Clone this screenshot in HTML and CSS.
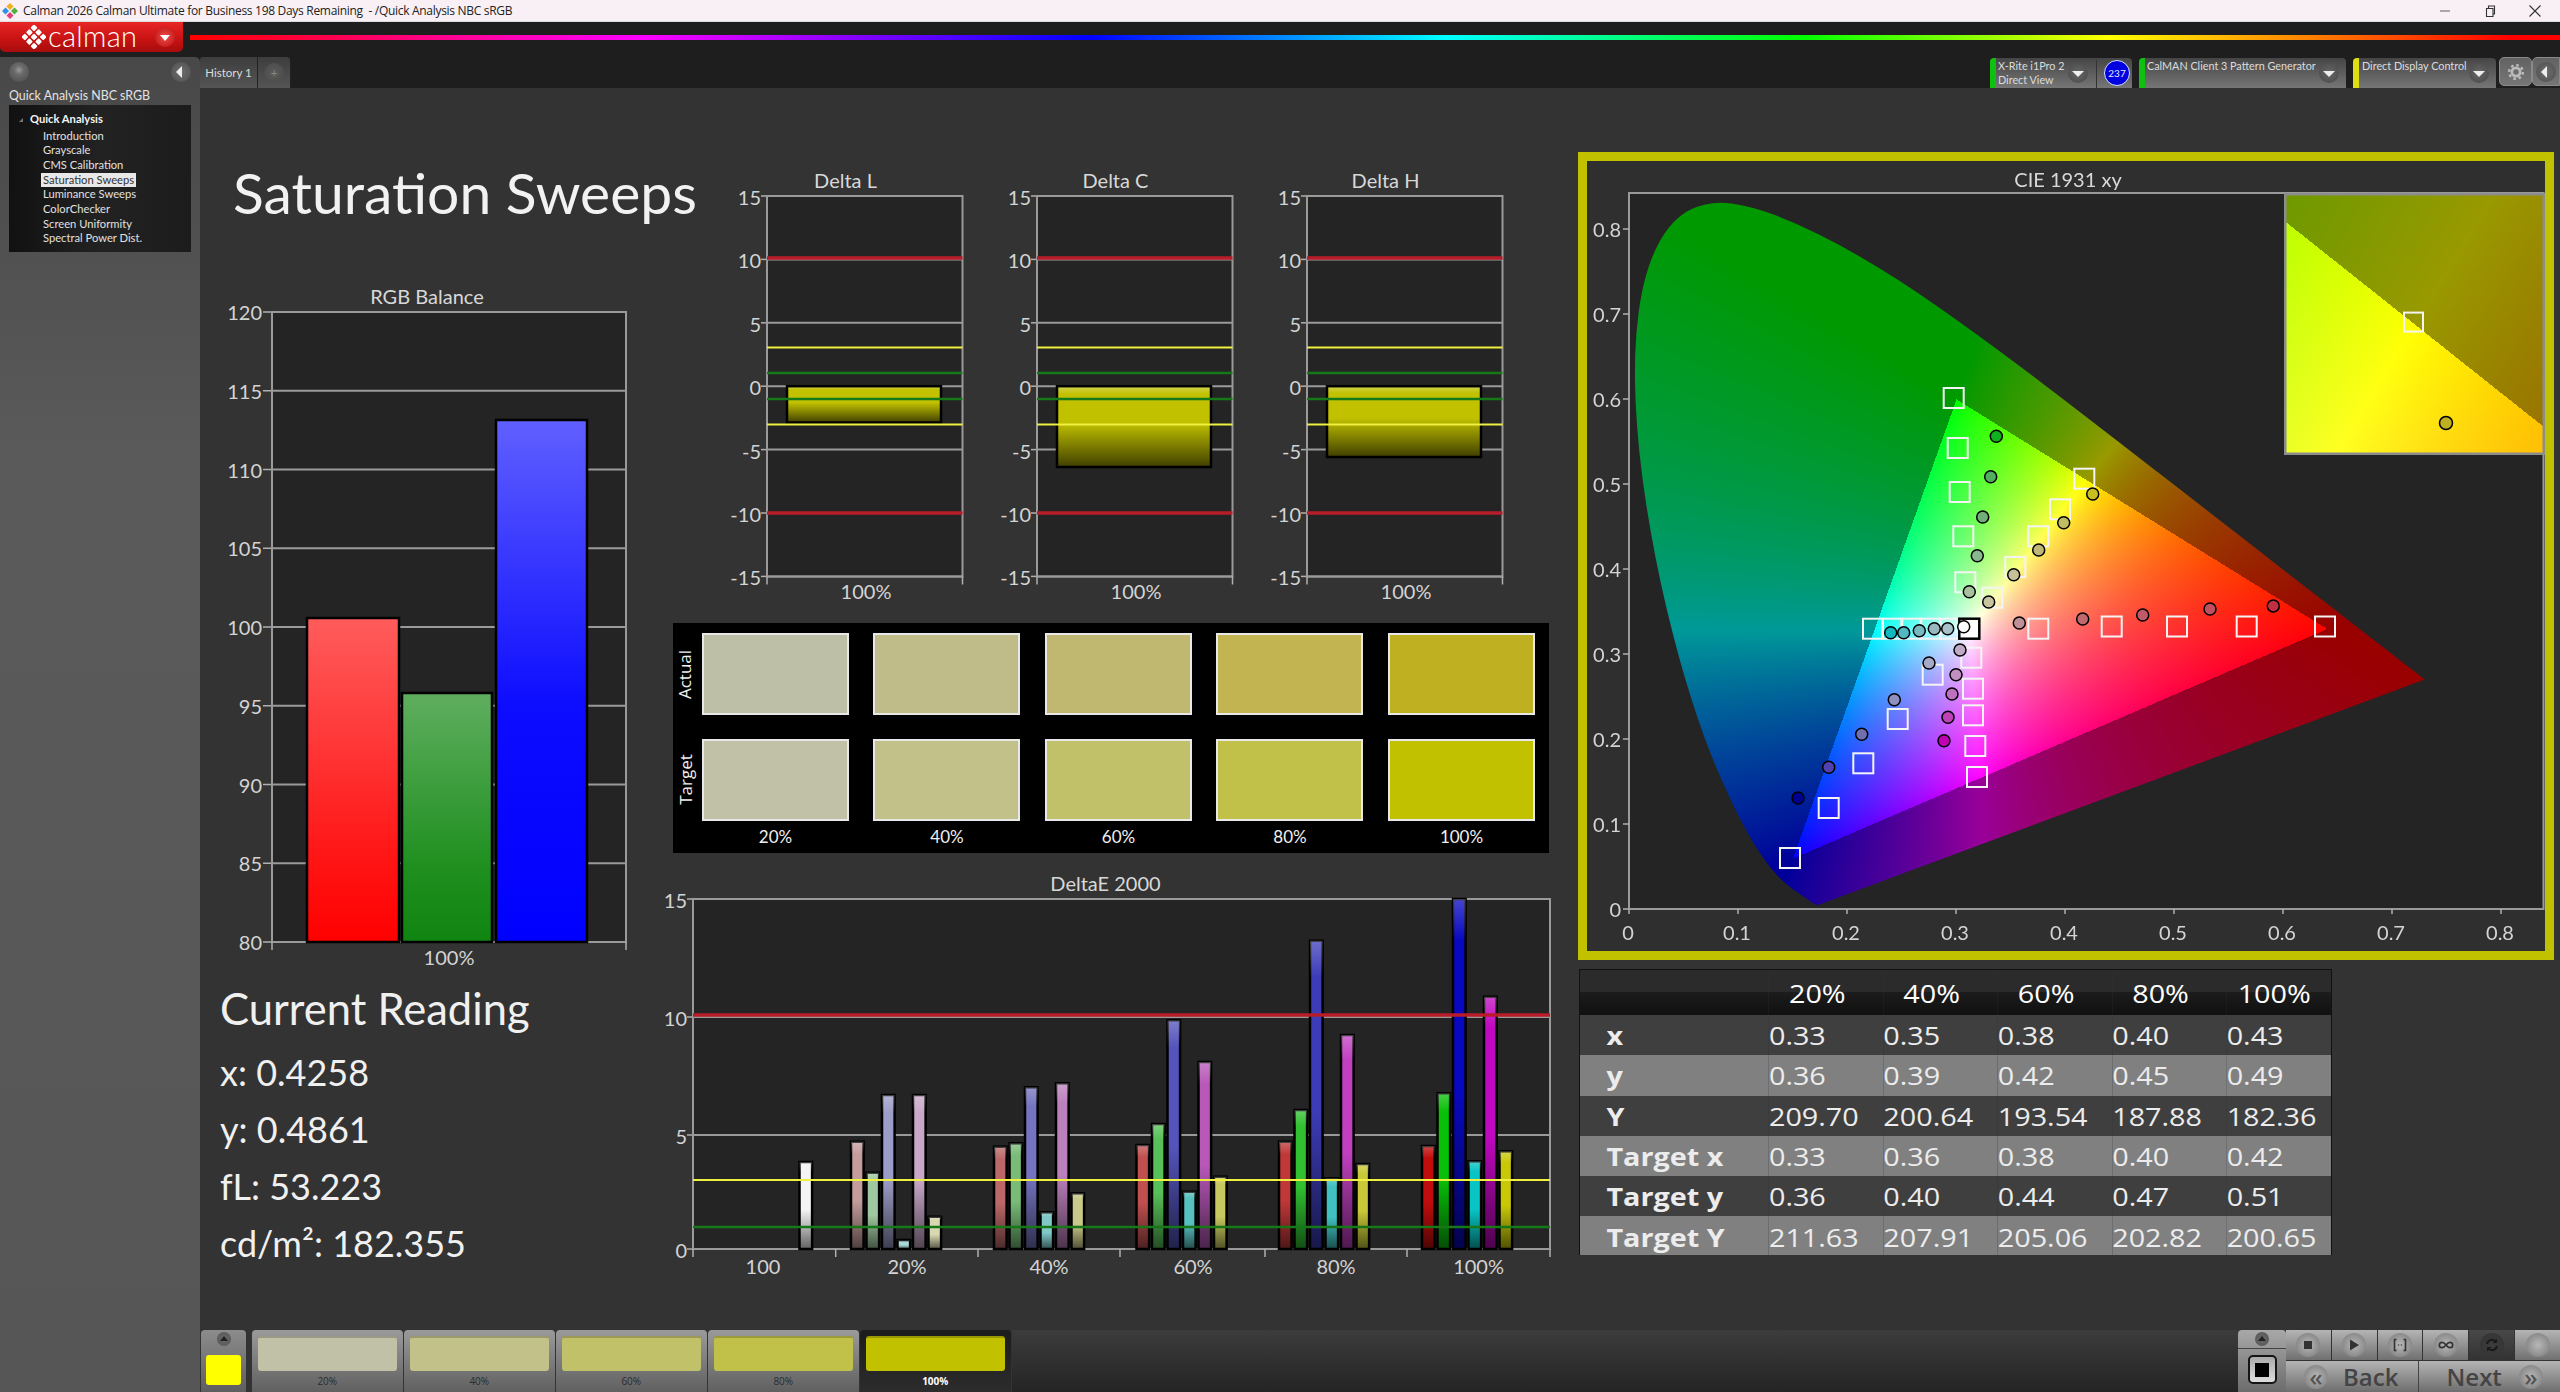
FILE: index.html
```html
<!DOCTYPE html>
<html lang="en">
<head>
    <meta charset="UTF-8">
    <title>Calman 2026 - Quick Analysis NBC sRGB</title>
    <link rel="stylesheet" href="styles.css">
</head>
<body>
    <header class="titlebar">
        <svg class="app-icon" viewBox="0 0 16 16" width="16" height="16">
            <rect x="5.5" y="1" width="5" height="5" fill="#f0b020" transform="rotate(45 8 3.5)"/>
            <rect x="1" y="5.5" width="5" height="5" fill="#3090e0" transform="rotate(45 3.5 8)"/>
            <rect x="10" y="5.5" width="5" height="5" fill="#50b040" transform="rotate(45 12.5 8)"/>
            <rect x="5.5" y="10" width="5" height="5" fill="#e04080" transform="rotate(45 8 12.5)"/>
        </svg>
        <span class="title-text">Calman 2026 Calman Ultimate for Business 198 Days Remaining &nbsp;- /Quick Analysis NBC sRGB</span>
        <div class="window-controls">
            <svg viewBox="0 0 14 14" width="14" height="14"><path d="M2 7h10" stroke="#888" stroke-width="1.4"/></svg>
            <svg viewBox="0 0 14 14" width="14" height="14"><path d="M3.5 4.5h6.5v8h-6.5zM5.5 4.5v-2.5h6v8h-1.6" fill="none" stroke="#333" stroke-width="1.1"/></svg>
            <svg viewBox="0 0 14 14" width="14" height="14"><path d="M1.5 1.5l11 11M12.5 1.5l-11 11" stroke="#333" stroke-width="1.1"/></svg>
        </div>
    </header>

    <div class="topbar">
        <div class="logo-button">
            <svg class="logo-mark" viewBox="0 0 24 24" width="24" height="24">
                <g transform="rotate(45 12 12)" fill="#fff">
                    <rect x="3" y="3" width="5" height="5" rx="1"/><rect x="9.5" y="3" width="5" height="5" rx="1"/><rect x="16" y="3" width="5" height="5" rx="1"/>
                    <rect x="3" y="9.5" width="5" height="5" rx="1"/><rect x="9.5" y="9.5" width="5" height="5" rx="1"/><rect x="16" y="9.5" width="5" height="5" rx="1"/>
                    <rect x="3" y="16" width="5" height="5" rx="1"/><rect x="9.5" y="16" width="5" height="5" rx="1"/><rect x="16" y="16" width="5" height="5" rx="1"/>
                </g>
            </svg>
            <span class="logo-text">calman</span>
            <span class="logo-drop"></span>
        </div>
        <div class="rainbow"></div>
    </div>

    <div class="app-row">
        <aside class="sidebar">
            <div class="sidebar-tools">
                <span class="knob"></span>
                <span class="knob knob-back"></span>
            </div>
            <div class="workflow-name">Quick Analysis NBC sRGB</div>
            <ul class="tree">
                <li class="tree-root">Quick Analysis</li>
                <li>Introduction</li>
                <li>Grayscale</li>
                <li>CMS Calibration</li>
                <li><span class="tree-selected">Saturation Sweeps</span></li>
                <li>Luminance Sweeps</li>
                <li>ColorChecker</li>
                <li>Screen Uniformity</li>
                <li>Spectral Power Dist.</li>
            </ul>
        </aside>

        <div class="workspace">
            <div class="tabrow">
                <div class="tab">History 1</div>
                <div class="tab tab-add"><span class="plus-knob">+</span></div>
                <div class="tabrow-spacer"></div>
                <div class="device device-xrite">
                    <div class="device-name">X-Rite i1Pro 2<br>Direct View</div>
                    <span class="drop"></span>
                    <span class="device-badge-cell"><span class="badge">237</span></span>
                </div>
                <div class="device device-client">
                    <div class="device-name">CalMAN Client 3 Pattern Generator</div>
                    <span class="drop"></span>
                </div>
                <div class="device device-direct">
                    <div class="device-name">Direct Display Control</div>
                    <span class="drop"></span>
                </div>
                <div class="square-btn">
                    <svg viewBox="0 0 24 24" width="22" height="22">
                        <circle cx="12" cy="12" r="4.5" fill="none" stroke="#bbb" stroke-width="3"/>
                        <circle cx="12" cy="12" r="7.500" fill="none" stroke="#bbb" stroke-width="2.600" stroke-dasharray="2.900 2.990"/>
                    </svg>
                </div>
                <div class="square-btn square-back"><span class="knob knob-back"></span></div>
            </div>

            <main class="main">
                <div class="content">
                    <section class="col-left">
                        <h1 class="page-title">Saturation Sweeps</h1>
                        <svg id="rgbChart" class="chart-rgb" viewBox="220 285 440 690"></svg>
                        <h2 class="reading-title">Current Reading</h2>
                        <div class="reading-line">x: 0.4258</div>
                        <div class="reading-line">y: 0.4861</div>
                        <div class="reading-line">fL: 53.223</div>
                        <div class="reading-line">cd/m²: 182.355</div>
                    </section>

                    <section class="col-mid">
                        <div class="delta-row">
                            <svg id="deltaL" class="chart-delta" viewBox="0 165 270 445"></svg>
                            <svg id="deltaC" class="chart-delta" viewBox="0 165 270 445"></svg>
                            <svg id="deltaH" class="chart-delta" viewBox="0 165 270 445"></svg>
                        </div>
                        <div class="swatch-panel">
                            <div class="swatch-row">
                                <div class="swatch-side"><span>Actual</span></div>
                                <div class="swatch a20"></div>
                                <div class="swatch a40"></div>
                                <div class="swatch a60"></div>
                                <div class="swatch a80"></div>
                                <div class="swatch a100"></div>
                            </div>
                            <div class="swatch-row">
                                <div class="swatch-side"><span>Target</span></div>
                                <div class="swatch t20"></div>
                                <div class="swatch t40"></div>
                                <div class="swatch t60"></div>
                                <div class="swatch t80"></div>
                                <div class="swatch t100"></div>
                            </div>
                            <div class="swatch-labels">
                                <span>20%</span><span>40%</span><span>60%</span><span>80%</span><span>100%</span>
                            </div>
                        </div>
                        <svg id="deltaE" class="chart-de" viewBox="663 865 915 410"></svg>
                    </section>

                    <section class="col-right">
                        <div class="cie-box">
                            <canvas id="cieCanvas" class="cie-canvas" width="915" height="716"></canvas>
                            <svg id="cieChart" class="cie-svg" viewBox="1587 161 958 790"></svg>
                            <canvas id="insetCanvas" class="inset-canvas" width="261" height="262"></canvas>
                            <svg id="insetMarks" class="inset-svg" viewBox="2284 193 261 262"></svg>
                        </div>
                        <div class="table-wrap">
                            <table class="data-table">
                                <thead>
                                    <tr><th></th><th>20%</th><th>40%</th><th>60%</th><th>80%</th><th class="last">100%</th></tr>
                                </thead>
                                <tbody>
                                    <tr><th>x</th><td>0.33</td><td>0.35</td><td>0.38</td><td>0.40</td><td>0.43</td></tr>
                                    <tr><th>y</th><td>0.36</td><td>0.39</td><td>0.42</td><td>0.45</td><td>0.49</td></tr>
                                    <tr><th>Y</th><td>209.70</td><td>200.64</td><td>193.54</td><td>187.88</td><td>182.36</td></tr>
                                    <tr><th>Target x</th><td>0.33</td><td>0.36</td><td>0.38</td><td>0.40</td><td>0.42</td></tr>
                                    <tr><th>Target y</th><td>0.36</td><td>0.40</td><td>0.44</td><td>0.47</td><td>0.51</td></tr>
                                    <tr><th>Target Y</th><td>211.63</td><td>207.91</td><td>205.06</td><td>202.82</td><td>200.65</td></tr>
                                </tbody>
                            </table>
                        </div>
                    </section>
                </div>

                <footer class="bottombar">
                    <div class="pattern-tool">
                        <span class="up-knob"></span>
                        <span class="pattern-yellow"></span>
                    </div>
                    <div class="step"><div class="step-swatch t20"></div><span>20%</span></div>
                    <div class="step"><div class="step-swatch t40"></div><span>40%</span></div>
                    <div class="step"><div class="step-swatch t60"></div><span>60%</span></div>
                    <div class="step"><div class="step-swatch t80"></div><span>80%</span></div>
                    <div class="step step-active"><div class="step-swatch t100"></div><span>100%</span></div>
                    <div class="strip"></div>
                    <div class="stop-tool">
                        <div class="stop-up"><span class="up-knob"></span></div>
                        <div class="stop-main"><span class="stop-square"><i></i></span></div>
                    </div>
                    <div class="nav-tools">
                        <div class="nav-icons">
                            <div class="nav-icon"><span class="nav-knob"><svg viewBox="0 0 16 16" width="16" height="16"><rect x="4" y="4" width="8" height="8" fill="#333"/></svg></span></div>
                            <div class="nav-icon"><span class="nav-knob"><svg viewBox="0 0 16 16" width="16" height="16"><path d="M4 2.5l9 5.5-9 5.5z" fill="#333"/></svg></span></div>
                            <div class="nav-icon"><span class="nav-knob"><svg viewBox="0 0 16 16" width="16" height="16"><path d="M4.5 2.5h-2v11h2M11.5 2.5h2v11h-2" fill="none" stroke="#333" stroke-width="1.6"/><path d="M6.2 8h1M8.8 8h1" stroke="#333" stroke-width="1.6"/></svg></span></div>
                            <div class="nav-icon"><span class="nav-knob"><svg viewBox="0 0 16 16" width="16" height="16"><path d="M8 8c-1.5-2-2.5-2.7-4-2.7-1.6 0-2.7 1.1-2.7 2.7s1.100 2.700 2.700 2.700c1.500 0 2.500-.7 4-2.700s2.500-2.700 4-2.700c1.600 0 2.700 1.100 2.700 2.700s-1.100 2.700-2.700 2.700c-1.500 0-2.500-.7-4-2.700z" fill="none" stroke="#333" stroke-width="1.7"/></svg></span></div>
                            <div class="nav-icon nav-icon-dark"><span class="nav-knob"><svg viewBox="0 0 16 16" width="16" height="16"><path d="M3 7a5 5 0 0 1 9-2M13 9a5 5 0 0 1-9 2" fill="none" stroke="#1a1a1a" stroke-width="2"/><path d="M13 1.500v4.500h-4.500zM3 14.500v-4.500h4.500z" fill="#1a1a1a"/></svg></span></div>
                            <div class="nav-icon"><span class="nav-knob"></span></div>
                        </div>
                        <div class="nav-buttons">
                            <div class="nav-button nav-back"><span class="nav-knob nav-arrow">«</span><span>Back</span></div>
                            <div class="nav-button nav-next"><span>Next</span><span class="nav-knob nav-arrow">»</span></div>
                        </div>
                    </div>
                </footer>
            </main>
        </div>
    </div>

    <script src="script.js"></script>
</body>
</html>
```

FILE: styles.css
```css
html, body {
    margin: 0;
    padding: 0;
}
body {
    width: 2560px;
    height: 1392px;
    overflow: hidden;
    display: flex;
    flex-direction: column;
    font-family: 'Lato', sans-serif;
    background-color: #1e1e1e;
}

/* window title */
.titlebar {
    height: 22px;
    flex: none;
    display: flex;
    align-items: center;
    background-color: #f8f0f4;
    border-bottom: 1px solid #ddd;
    box-sizing: border-box;
    font-family: 'Open Sans', sans-serif;
    font-size: 12px;
    color: #222;
}
.app-icon {
    margin-left: 2px;
}
.title-text {
    margin-left: 5px;
    letter-spacing: -0.3px;
}
.window-controls {
    margin-left: auto;
    display: flex;
    gap: 31px;
    padding-right: 18px;
}

/* logo and rainbow */
.topbar {
    height: 35px;
    flex: none;
    display: flex;
    background-color: #1e1e1e;
}
.logo-button {
    width: 183px;
    height: 30px;
    position: relative;
    display: flex;
    align-items: center;
    box-sizing: border-box;
    padding-left: 22px;
    background: linear-gradient(#e82626, #c91313 55%, #a80c0c);
    border-radius: 0 0 5px 5px;
}
.logo-text {
    margin-left: 2px;
    margin-top: -3px;
    font-size: 29px;
    font-weight: 300;
    line-height: 30px;
    color: #fff;
    letter-spacing: 0.3px;
}
.logo-drop {
    margin-left: auto;
    margin-right: 8px;
    width: 20px;
    height: 20px;
    border-radius: 50%;
    background: radial-gradient(#f04a4a, #b81010);
    position: relative;
}
.logo-drop::after {
    content: '';
    position: absolute;
    left: 5px;
    top: 8px;
    border: 5px solid transparent;
    border-top: 6px solid #fff;
    border-bottom: 0;
}
.rainbow {
    flex: 1;
    height: 5px;
    margin: 13px 0 0 7px;
    background: linear-gradient(90deg, #ff0000, #ff00ff 19%, #0000ff 38%, #00ffff 53%, #00ff00 68%, #ffff00 81%, #ff0000 98%);
}

.app-row {
    flex: 1;
    display: flex;
    min-height: 0;
}

/* left tree */
.sidebar {
    width: 200px;
    flex: none;
    background: linear-gradient(#484848, #5a5a5a 30%, #565656);
    border-radius: 0 5px 0 0;
    box-sizing: border-box;
    padding: 0 9px;
}
.sidebar-tools {
    height: 30px;
    display: flex;
    justify-content: space-between;
    align-items: center;
}
.knob {
    width: 20px;
    height: 20px;
    border-radius: 50%;
    background: radial-gradient(circle at 50% 40%, #9a9a9a 0, #6a6a6a 30%, #4a4a4a 100%);
    display: block;
    position: relative;
}
.knob-back {
    background: radial-gradient(#6e6e6e, #4e4e4e);
}
.knob-back::after {
    content: '';
    position: absolute;
    left: 5px;
    top: 4px;
    border: 6px solid transparent;
    border-right: 6px solid #eee;
    border-left: 0;
}
.workflow-name {
    height: 18px;
    line-height: 18px;
    font-size: 12.4px;
    color: #e4e4e4;
}
.tree {
    list-style: none;
    margin: 0;
    padding: 7px 0 6px 34px;
    height: 147px;
    box-sizing: border-box;
    background: linear-gradient(90deg, #111, #222 50%, #1c1c1c);
    font-size: 11.2px;
    color: #e0e0e0;
    width: 182px;
}
.tree li {
    height: 14.67px;
    line-height: 14.67px;
    white-space: nowrap;
}
.tree .tree-root {
    margin-left: -13px;
    font-weight: bold;
    color: #f4f4f4;
    position: relative;
    margin-bottom: 2px;
}
.tree .tree-root::before {
    content: '';
    position: absolute;
    left: -11px;
    top: 6px;
    border-left: 4px solid transparent;
    border-bottom: 4px solid #777;
}
.tree-selected {
    display: inline-block;
    background-color: #e8e8e8;
    color: #333;
    padding: 0 2px;
    margin-left: -2px;
}

/* tab row */
.workspace {
    flex: 1;
    display: flex;
    flex-direction: column;
    min-width: 0;
}
.tabrow {
    height: 31px;
    flex: none;
    display: flex;
    align-items: flex-end;
    background-color: #1e1e1e;
    color: #dcdcdc;
    font-size: 11.5px;
}
.tab {
    width: 58px;
    height: 31px;
    box-sizing: border-box;
    display: flex;
    align-items: center;
    justify-content: center;
    background: linear-gradient(#3d3d3d, #555);
    border-right: 1px solid #222;
    border-radius: 3px 0 0 0;
}
.tab-add {
    width: 33px;
    border-radius: 0 4px 0 0;
}
.plus-knob {
    width: 20px;
    height: 20px;
    border-radius: 50%;
    background: radial-gradient(#5c5c5c, #484848);
    text-align: center;
    line-height: 20px;
    color: #888;
}
.tabrow-spacer {
    flex: 1;
}
.device {
    height: 30px;
    box-sizing: border-box;
    display: flex;
    position: relative;
    background: linear-gradient(#454545, #767676);
    border-left: 6px solid #10c010;
    border-radius: 4px 4px 0 0;
    margin-right: 7px;
    padding-left: 2px;
    font-size: 10.8px;
    line-height: 14px;
}
.device-name {
    padding-top: 1px;
    white-space: nowrap;
}
.device-xrite {
    width: 142px;
}
.device-client {
    width: 207px;
}
.device-direct {
    width: 143px;
    border-left-color: #dede10;
    margin-right: 3px;
    padding-left: 3px;
}
.drop {
    position: absolute;
    top: 5px;
    right: 7px;
    width: 20px;
    height: 20px;
    border-radius: 50%;
    background: radial-gradient(#666, #484848);
}
.drop::after {
    content: '';
    position: absolute;
    left: 4px;
    top: 8px;
    border: 6px solid transparent;
    border-top: 6px solid #eee;
    border-bottom: 0;
}
.device-xrite .drop {
    right: 44px;
}
.device-badge-cell {
    position: absolute;
    right: 0;
    top: 2px;
    bottom: 0;
    width: 35px;
    border-left: 1px solid #333;
}
.badge {
    position: absolute;
    left: 7px;
    top: 0;
    width: 24px;
    height: 24px;
    border-radius: 50%;
    background-color: #0000e0;
    border: 1px solid #cfe0ff;
    color: #e8e8ff;
    font-size: 10px;
    line-height: 24px;
    text-align: center;
}
.square-btn {
    width: 33px;
    height: 29px;
    margin-bottom: 2px;
    box-sizing: border-box;
    display: flex;
    align-items: center;
    justify-content: center;
    border: 1px solid #8a8a8a;
    border-radius: 5px;
    background: linear-gradient(#626262, #767676);
}
.square-back {
    width: 28px;
    border-radius: 5px 0 0 5px;
}

/* main area */
.main {
    flex: 1;
    display: flex;
    flex-direction: column;
    min-height: 0;
    background-color: #333;
}
.content {
    height: 1242px;
    flex: none;
    display: flex;
}
.col-left {
    width: 463px;
    flex: none;
}
.page-title {
    margin: 74px 0 0 33px;
    font-weight: 400;
    font-size: 57px;
    line-height: 60px;
    color: #f2f2f2;
    white-space: nowrap;
}
.chart-rgb {
    display: block;
    width: 440px;
    height: 690px;
    margin: 63px 0 0 20px;
}
.reading-title {
    margin: 8px 0 11px 20px;
    font-weight: 400;
    font-size: 43.5px;
    line-height: 50px;
    color: #f0f0f0;
}
.reading-line {
    margin-left: 20px;
    font-size: 36px;
    height: 57px;
    line-height: 57px;
    color: #f0f0f0;
}

.col-mid {
    width: 915px;
    flex: none;
}
.delta-row {
    display: flex;
    margin: 77px 0 0 59px;
}
.chart-delta {
    display: block;
    width: 270px;
    height: 445px;
}
.swatch-panel {
    margin: 12.5px 0 0 9.6px;
    width: 876px;
    height: 230.5px;
    box-sizing: border-box;
    padding-top: 10.5px;
    background-color: #000;
}
.swatch-row {
    display: flex;
    gap: 24.5px;
    margin-bottom: 23.5px;
}
.swatch-side {
    width: 4.9px;
    height: 82px;
    display: flex;
    align-items: center;
    justify-content: center;
    margin: 0 -10px 0 10px;
    font-family: 'Open Sans', sans-serif;
    font-size: 17px;
    color: #f0f0f0;
}
.swatch-side span {
    transform: rotate(-90deg);
}
.swatch {
    width: 147px;
    height: 82px;
    box-sizing: border-box;
    border: 2px solid #e8e8e8;
}
.swatch-labels {
    display: flex;
    gap: 24.5px;
    margin: -18px 0 0 29.4px;
    font-size: 17px;
    color: #f0f0f0;
}
.swatch-labels span {
    width: 147px;
    text-align: center;
}
.a20 { background-color: #bdbfa7; }
.a40 { background-color: #c0bc8a; }
.a60 { background-color: #c0b870; }
.a80 { background-color: #c2b451; }
.a100 { background-color: #bfb022; }
.t20 { background-color: #c0c1a7; }
.t40 { background-color: #c1c189; }
.t60 { background-color: #c1c16a; }
.t80 { background-color: #c1c14a; }
.t100 { background-color: #c1c100; }
.chart-de {
    display: block;
    width: 915px;
    height: 410px;
    margin-top: 12px;
}

.col-right {
    flex: 1;
    padding-top: 64px;
}
.cie-box {
    position: relative;
    width: 976px;
    height: 808px;
    box-sizing: border-box;
    border: 9px solid #c1c100;
    background-color: #2f2f2f;
}
.cie-canvas {
    position: absolute;
    left: 42px;
    top: 32px;
}
.cie-svg {
    position: absolute;
    left: 0;
    top: 0;
    width: 958px;
    height: 790px;
}
.inset-canvas {
    position: absolute;
    left: 697px;
    top: 32px;
}
.inset-svg {
    position: absolute;
    left: 697px;
    top: 32px;
    width: 261px;
    height: 262px;
}

/* svg chart bits */
.plot-bg {
    fill: #242424;
}
.frame {
    fill: none;
    stroke: #9a9a9a;
    stroke-width: 2;
}
.grid-line {
    stroke: #9a9a9a;
    stroke-width: 2;
}
.tick {
    stroke: #b0b0b0;
    stroke-width: 1.5;
}
.axis-label {
    font-family: 'Lato', sans-serif;
    font-size: 20px;
    fill: #d4d4d4;
    text-anchor: end;
    dominant-baseline: central;
}
.x-label {
    font-family: 'Lato', sans-serif;
    font-size: 20px;
    fill: #d4d4d4;
    text-anchor: middle;
    dominant-baseline: central;
}
.chart-title {
    font-family: 'Lato', sans-serif;
    font-size: 20px;
    fill: #d8d8d8;
    text-anchor: middle;
    dominant-baseline: central;
}
.limit-red {
    stroke: #b81c28;
    stroke-width: 3.5;
}
.limit-yellow {
    stroke: #f0f040;
    stroke-width: 2;
}
.limit-green {
    stroke: #167816;
    stroke-width: 2.5;
}
.bar-edge {
    stroke: #000;
    stroke-width: 2.5;
}
.target-mark {
    fill: none;
    stroke: #f4f4f4;
    stroke-width: 2;
}
.white-mark {
    fill: rgba(255, 255, 255, 0.85);
    stroke: #000;
    stroke-width: 2.5;
}
.actual-mark {
    stroke: #000;
    stroke-width: 1.5;
}
.inset-frame {
    fill: none;
    stroke: #8c8c8c;
    stroke-width: 3;
}

/* table */
.table-wrap {
    margin: 9px 0 0 1px;
    width: 753px;
    height: 286px;
    border: 1px solid #111;
    border-bottom: 0;
    box-sizing: border-box;
    overflow: hidden;
}
.data-table {
    width: 653px;
    table-layout: fixed;
    border-collapse: collapse;
    transform: scaleX(1.15);
    transform-origin: left top;
    font-family: 'Open Sans', sans-serif;
    font-size: 25px;
    color: #ececec;
}
.data-table thead tr {
    height: 45px;
    background: linear-gradient(#2b2b2b, #2b2b2b 50%, #1c1c1c 50%, #101010);
}
.data-table th,
.data-table td {
    box-sizing: border-box;
}
.data-table thead th {
    padding: 0 0 0 17.4px;
    width: 99.5px;
    text-align: left;
    font-weight: 400;
    color: #fff;
}
.data-table thead th:first-child {
    width: 164.3px;
    padding: 0;
}
.data-table thead th.last {
    width: 91px;
    padding-left: 9.600px;
}
.data-table tbody tr {
    height: 40.3px;
    background-color: #3f3f3f;
}
.data-table tbody tr:nth-child(even) {
    background-color: #808080;
}
.data-table tbody th {
    padding: 0 0 0 23px;
    text-align: left;
    font-weight: 700;
    white-space: nowrap;
}
.data-table td {
    padding: 0;
}

/* bottom strip */
.bottombar {
    flex: 1;
    display: flex;
    padding-left: 1px;
    gap: 1.5px;
}
.pattern-tool {
    width: 45px;
    margin-right: 4.5px;
    display: flex;
    flex-direction: column;
    align-items: center;
    border-radius: 4px 4px 0 0;
    background: linear-gradient(#8c8c8c, #5e5e5e);
}
.up-knob {
    display: block;
    margin-top: 2px;
    width: 14px;
    height: 14px;
    border-radius: 50%;
    background: radial-gradient(#6a6a6a, #555);
    position: relative;
}
.up-knob::after {
    content: '';
    position: absolute;
    left: 3px;
    top: 4px;
    border: 4px solid transparent;
    border-bottom: 5px solid #222;
    border-top: 0;
}
.pattern-yellow {
    width: 35px;
    height: 30px;
    margin-top: 9px;
    border-radius: 3px;
    background-color: #ffff00;
}
.step {
    width: 150.5px;
    box-sizing: border-box;
    padding: 6px 6px 0;
    border-radius: 4px 4px 0 0;
    background: linear-gradient(#9a9a9a, #606060);
    text-align: center;
    font-family: 'Open Sans', sans-serif;
    font-size: 10px;
    line-height: 21px;
    color: #2c2c2c;
}
.step-swatch {
    height: 35px;
    border-radius: 3px;
    border-top: 2px solid rgba(0, 0, 0, 0.2);
    box-sizing: border-box;
}
.step-active {
    background: linear-gradient(#1c1c1c, #2c2c2c);
    color: #fff;
    font-weight: bold;
}
.strip {
    flex: 1;
    background: linear-gradient(#3c3c3c, #242424);
}
.stop-tool {
    width: 48px;
    flex: none;
    border-radius: 4px 4px 0 0;
    overflow: hidden;
    margin-left: -1.5px;
    background: linear-gradient(#a8a8a8, #6c6c6c);
}
.stop-up {
    height: 18px;
    display: flex;
    justify-content: center;
    border-bottom: 1px solid #444;
}
.stop-main {
    display: flex;
    justify-content: center;
    padding-top: 6px;
}
.stop-square {
    width: 29px;
    height: 29px;
    box-sizing: border-box;
    border: 2px solid #151515;
    border-radius: 5px;
    background: linear-gradient(#aaa, #ddd);
    display: flex;
    align-items: center;
    justify-content: center;
}
.stop-square i {
    display: block;
    width: 14px;
    height: 14px;
    background-color: #000;
}
.nav-tools {
    width: 274px;
    flex: none;
    display: flex;
    flex-direction: column;
    margin-left: -1.5px;
}
.nav-icons {
    height: 30px;
    display: flex;
    border-bottom: 1px solid #333;
}
.nav-icon {
    flex: 1;
    display: flex;
    align-items: center;
    justify-content: center;
    border-right: 1px solid #333;
    background: linear-gradient(#b4b4b4, #707070);
}
.nav-icon-dark {
    background: linear-gradient(#484848, #333);
}
.nav-icon:last-child {
    border-right: 0;
}
.nav-knob {
    width: 24px;
    height: 24px;
    border-radius: 50%;
    display: flex;
    align-items: center;
    justify-content: center;
    background: radial-gradient(#b8b8b8, #8a8a8a 70%, #808080);
}
.nav-icon-dark .nav-knob {
    background: radial-gradient(#3c3c3c, #333);
}
.nav-buttons {
    flex: 1;
    display: flex;
}
.nav-button {
    flex: 1;
    display: flex;
    align-items: center;
    box-sizing: border-box;
    background: linear-gradient(#b4b4b4, #6e6e6e);
    color: #444;
    font-family: 'Open Sans', sans-serif;
    font-size: 24px;
    font-weight: 600;
    line-height: 30px;
}
.nav-back {
    border-right: 1px solid #444;
    padding-left: 18px;
    gap: 15px;
}
.nav-next {
    padding-left: 28px;
    gap: 17px;
}
.nav-arrow {
    font-size: 24px;
    color: #555;
    line-height: 20px;
    padding-bottom: 0;
}
```

FILE: script.js
```javascript
const svgNS = 'http://www.w3.org/2000/svg';

function el(parent, tag, attrs, text) {
    const node = document.createElementNS(svgNS, tag);
    for (const key in attrs) {
        node.setAttribute(key, attrs[key]);
    }
    if (text !== undefined) {
        node.textContent = text;
    }
    parent.appendChild(node);
    return node;
}

function hline(svg, x1, x2, y, cls) {
    el(svg, 'line', { x1: x1, x2: x2, y1: y, y2: y, class: cls });
}

function vline(svg, x, y1, y2, cls) {
    el(svg, 'line', { x1: x, x2: x, y1: y1, y2: y2, class: cls });
}

function gradient(svg, id, stops) {
    let defs = svg.querySelector('defs');
    if (!defs) {
        defs = el(svg, 'defs', {});
    }
    const grad = el(defs, 'linearGradient', { id: id, x1: 0, y1: 0, x2: 0, y2: 1 });
    stops.forEach(s => {
        el(grad, 'stop', { offset: s[0], 'stop-color': s[1], 'stop-opacity': s[2] === undefined ? 1 : s[2] });
    });
}

// RGB balance
function drawRgb() {
    const svg = document.getElementById('rgbChart');
    const left = 272, right = 626, top = 312, bottom = 942;
    gradient(svg, 'gradRed', [[0, '#ff5c5c'], [0.75, '#ff1414'], [1, '#ff0000']]);
    gradient(svg, 'gradGreen', [[0, '#5fae5f'], [0.7, '#1f8f1f'], [1, '#108410']]);
    gradient(svg, 'gradBlue', [[0, '#6060ff'], [0.55, '#0c0cff'], [1, '#0000ff']]);
    el(svg, 'text', { x: 427, y: 296, class: 'chart-title' }, 'RGB Balance');
    el(svg, 'rect', { x: left, y: top, width: right - left, height: bottom - top, class: 'plot-bg' });
    for (let v = 80; v <= 120; v += 5) {
        const y = bottom - (v - 80) * 15.75;
        hline(svg, left, right, y, 'grid-line');
        hline(svg, left - 9, left, y, 'tick');
        el(svg, 'text', { x: left - 10, y: y, class: 'axis-label' }, v);
    }
    el(svg, 'rect', { x: left, y: top, width: right - left, height: bottom - top, class: 'frame' });
    vline(svg, left, bottom, bottom + 8, 'tick');
    vline(svg, right, bottom, bottom + 8, 'tick');
    [[307, 92, 618, 'gradRed'], [402, 90, 693, 'gradGreen'], [496, 91, 420, 'gradBlue']].forEach(b => {
        el(svg, 'rect', { x: b[0], y: b[2], width: b[1], height: bottom - b[2], fill: 'url(#' + b[3] + ')', class: 'bar-edge' });
    });
    el(svg, 'text', { x: 449, y: 957, class: 'x-label' }, '100%');
}

// Delta L, C, H
function drawDelta(id, title, bottomBar) {
    const svg = document.getElementById(id);
    const left = 45, right = 240.5, top = 196, bottom = 576.5, unit = 12.68;
    const zero = 386.2;
    gradient(svg, id + 'Bar', [[0, '#d2d250'], [0.1, '#c1c100'], [0.45, '#c1c100'], [1, '#403f00']]);
    el(svg, 'text', { x: 123.5, y: 180, class: 'chart-title' }, title);
    el(svg, 'rect', { x: left, y: top, width: right - left, height: bottom - top, class: 'plot-bg' });
    for (let v = -15; v <= 15; v += 5) {
        const y = zero - v * unit;
        hline(svg, left, right, y, 'grid-line');
        hline(svg, left - 6, left, y, 'tick');
        el(svg, 'text', { x: left - 6, y: y + 1, class: 'axis-label' }, v);
    }
    el(svg, 'rect', { x: left, y: top, width: right - left, height: bottom - top, class: 'frame' });
    vline(svg, left, bottom, bottom + 8, 'tick');
    vline(svg, right, bottom, bottom + 8, 'tick');
    el(svg, 'rect', { x: 65, y: zero, width: 154, height: bottomBar - zero, fill: 'url(#' + id + 'Bar)', class: 'bar-edge' });
    hline(svg, left, right, 258, 'limit-red');
    hline(svg, left, right, 513, 'limit-red');
    hline(svg, left, right, 347.5, 'limit-yellow');
    hline(svg, left, right, 424.5, 'limit-yellow');
    hline(svg, left, right, 373, 'limit-green');
    hline(svg, left, right, 399, 'limit-green');
    el(svg, 'text', { x: 144, y: 591, class: 'x-label' }, '100%');
}

// DeltaE 2000 bar groups, tops in chart pixels
const deGroups = [
    { x: 799.5, tops: [1162], colors: ['#f4f4f4'] },
    { x: 851, tops: [1141.7, 1172.7, 1095, 1240, 1095, 1216.7], colors: ['#c49c9c', '#a0c8a0', '#9c9cc8', '#a8d8d8', '#c8a8c8', '#d8d8b0'] },
    { x: 994, tops: [1146.7, 1143.3, 1087.3, 1212.3, 1083.3, 1193.3], colors: ['#bc6868', '#78bc78', '#7474c0', '#80c8c8', '#bc80bc', '#c8c888'] },
    { x: 1136.5, tops: [1145, 1124, 1020.3, 1191.7, 1062, 1176.7], colors: ['#c05050', '#58c058', '#5454bc', '#58c0c0', '#b858b8', '#c8c860'] },
    { x: 1279, tops: [1141.7, 1110, 940.7, 1178.3, 1035, 1164], colors: ['#c03838', '#30c030', '#3c3cb8', '#40c0c0', '#c040c0', '#c8c838'] },
    { x: 1422, tops: [1146, 1093.3, 899, 1161.3, 996.7, 1151.3], colors: ['#c00c0c', '#08c008', '#0808c0', '#08c4c4', '#c008c0', '#c8c808'] }
];

function drawDeltaE() {
    const svg = document.getElementById('deltaE');
    const left = 693, right = 1550, top = 899, bottom = 1249;
    gradient(svg, 'deShade', [[0, '#ffffff', 0.25], [0.12, '#ffffff', 0], [0.55, '#000000', 0], [1, '#000000', 0.6]]);
    el(svg, 'text', { x: 1105.5, y: 883, class: 'chart-title' }, 'DeltaE 2000');
    el(svg, 'rect', { x: left, y: top, width: right - left, height: bottom - top, class: 'plot-bg' });
    [[15, 899], [10, 1017], [5, 1135], [0, 1249]].forEach(g => {
        hline(svg, left, right, g[1], 'grid-line');
        hline(svg, left - 6, left, g[1], 'tick');
        el(svg, 'text', { x: left - 6, y: g[1] + 1, class: 'axis-label' }, g[0]);
    });
    hline(svg, left, right, 899, 'grid-line');
    el(svg, 'rect', { x: left, y: top, width: right - left, height: bottom - top, class: 'frame' });
    [693, 835.7, 978, 1120, 1265, 1407, 1550].forEach(x => vline(svg, x, bottom, bottom + 8, 'tick'));
    ['100', '20%', '40%', '60%', '80%', '100%'].forEach((t, i) => {
        el(svg, 'text', { x: [763, 907, 1049, 1193, 1336, 1478.6][i], y: 1266, class: 'x-label' }, t);
    });
    deGroups.forEach(group => {
        group.tops.forEach((topY, i) => {
            const attrs = { x: group.x + i * 15.5, y: topY, width: 12.6, height: bottom - topY };
            el(svg, 'rect', Object.assign({ fill: group.colors[i], class: 'bar-edge' }, attrs));
            el(svg, 'rect', Object.assign({ fill: 'url(#deShade)' }, attrs));
        });
    });
    hline(svg, left, right, 1015, 'limit-red');
    hline(svg, left, right, 1180, 'limit-yellow');
    hline(svg, left, right, 1227, 'limit-green');
}

// CIE 1931 locus, 380nm up to 660nm
const locus = [[.1741,.005],[.1733,.0048],[.1726,.0048],[.1714,.0051],[.1703,.0058],[.1689,.0069],[.1669,.0086],[.1644,.0109],[.1611,.0138],[.1566,.0177],[.151,.0227],[.144,.0297],[.1355,.0399],[.1241,.0578],[.1096,.0868],[.0913,.1327],[.0687,.2007],[.0454,.295],[.0235,.4127],[.0082,.5384],[.0039,.6548],[.0139,.7502],[.0389,.812],[.0743,.8338],[.1142,.8262],[.1547,.8059],[.1929,.7816],[.2296,.7543],[.2658,.7243],[.3016,.6923],[.3373,.6589],[.3731,.6245],[.4087,.5896],[.4441,.5547],[.4788,.5202],[.5125,.4866],[.5448,.4544],[.5752,.4242],[.6029,.3965],[.627,.3725],[.6482,.3514],[.6658,.334],[.6801,.3197],[.6915,.3083],[.7006,.2993],[.7079,.292],[.714,.2859],[.719,.2809],[.73,.27]];

// xy to screen colour, dimmed outside the Rec.709 triangle
function xyColor(x, y) {
    const X = x / y, Z = (1 - x - y) / y;
    let r = 3.2406 * X - 1.5372 - 0.4986 * Z;
    let g = -0.9689 * X + 1.8758 + 0.0415 * Z;
    let b = 0.0557 * X - 0.204 + 1.057 * Z;
    const inside = r >= 0 && g >= 0 && b >= 0;
    r = Math.max(r, 0); g = Math.max(g, 0); b = Math.max(b, 0);
    const m = Math.max(r, g, b) || 1;
    const dim = inside ? 255 : 153;
    return [Math.pow(r / m, 0.85) * dim, Math.pow(g / m, 0.85) * dim, Math.pow(b / m, 0.85) * dim];
}

function paintColors(ctx, w, h, toX, toY) {
    const img = ctx.createImageData(w, h);
    for (let py = 0; py < h; py++) {
        for (let px = 0; px < w; px++) {
            const c = xyColor(toX(px), Math.max(toY(py), 0.002));
            const i = (py * w + px) * 4;
            img.data[i] = c[0];
            img.data[i + 1] = c[1];
            img.data[i + 2] = c[2];
            img.data[i + 3] = 255;
        }
    }
    return img;
}

function drawCieCanvas() {
    const canvas = document.getElementById('cieCanvas');
    const ctx = canvas.getContext('2d');
    const w = canvas.width, h = canvas.height;
    const off = document.createElement('canvas');
    off.width = w;
    off.height = h;
    off.getContext('2d').putImageData(paintColors(ctx, w, h, px => px / 1090, py => (716 - py) / 850), 0, 0);
    ctx.fillStyle = '#242424';
    ctx.fillRect(0, 0, w, h);
    const pts = locus.map(p => [p[0] * 1090, 716 - p[1] * 850]);
    ctx.beginPath();
    ctx.moveTo(pts[0][0], pts[0][1]);
    // smooth through the midpoints so the horseshoe has no corners
    for (let i = 1; i < pts.length - 1; i++) {
        ctx.quadraticCurveTo(pts[i][0], pts[i][1], (pts[i][0] + pts[i + 1][0]) / 2, (pts[i][1] + pts[i + 1][1]) / 2);
    }
    ctx.lineTo(pts[pts.length - 1][0], pts[pts.length - 1][1]);
    ctx.closePath();
    ctx.clip();
    ctx.drawImage(off, 0, 0);

    const inset = document.getElementById('insetCanvas');
    const ictx = inset.getContext('2d');
    // 5000 px per unit, centred so the target lands on its square
    ictx.putImageData(paintColors(ictx, inset.width, inset.height,
        px => 0.4193 + (px - 130) / 5000,
        py => 0.5055 - (py - 129.6) / 5000), 0, 0);
}

const targets = [
    [1953.7,398],[1957.7,448],[1959.7,492],[1963.3,536.3],[1965.3,582.3],
    [2084.3,478.7],[2060,509.3],[2038.3,536.3],[2015.3,567],[1992.3,597.7],
    [2325,626.5],[2246.7,626.5],[2177,626.5],[2111.7,626.5],[2038.3,628.7],
    [1873,628.7],[1892.3,628.7],[1911.3,628.7],[1930.7,628.7],[1950,628.7],
    [1790,858],[1828.7,808],[1863.3,763.3],[1897.7,719],[1932.7,674.7],
    [1977,777],[1975.3,746],[1973,715.3],[1973,688.7],[1971.3,657.7]
];

const actuals = [
    [1996.3,436.3,'#10b020'],[1990.7,476.7,'#50b060'],[1982.7,517,'#70b078'],[1977.3,555.7,'#88b890'],[1969.3,591.7,'#a8c0a0'],
    [2092.7,494,'#c8c020'],[2063.7,522.7,'#c0bc60'],[2038.7,550,'#c0b878'],[2013.7,574.7,'#c8c098'],[1988.7,602,'#c8c4a0'],
    [2273.3,605.9,'#c03040'],[2210,609,'#c05060'],[2142.7,615,'#c05a68'],[2082.7,619,'#c06a70'],[2019.3,623,'#c09098'],
    [1890.7,632.7,'#10b8c0'],[1903.7,632.7,'#50b8c0'],[1919.3,630.7,'#78b8c0'],[1934.3,628.7,'#98b8c0'],[1947.7,628.7,'#a8c0c8'],
    [1798,798,'#000090'],[1828.7,767.3,'#5040b0'],[1861.7,734.3,'#7070b0'],[1894.3,699.7,'#9090c0'],[1929,663,'#a8a8c8'],
    [1944,740.7,'#c000b0'],[1948,717.3,'#c040b8'],[1952,694,'#c070c0'],[1956,674.7,'#c090c0'],[1960,650,'#c0a8c8']
];

function drawCieMarks() {
    const svg = document.getElementById('cieChart');
    const left = 1629, right = 2543.5, top = 193, bottom = 909;
    el(svg, 'text', { x: 2068, y: 179, class: 'chart-title' }, 'CIE 1931 xy');
    el(svg, 'rect', { x: left, y: top, width: right - left, height: bottom - top, class: 'frame' });
    for (let i = 0; i <= 8; i++) {
        const label = i === 0 ? '0' : (i / 10).toFixed(1);
        const x = left + i * 109, y = bottom - i * 85;
        vline(svg, x, bottom, bottom + 5, 'tick');
        hline(svg, left - 6, left, y, 'tick');
        el(svg, 'text', { x: x - 1, y: 932, class: 'x-label' }, label);
        el(svg, 'text', { x: left - 8, y: y, class: 'axis-label' }, label);
    }
    targets.forEach(t => {
        el(svg, 'rect', { x: t[0] - 10, y: t[1] - 10, width: 20, height: 20, class: 'target-mark' });
    });
    el(svg, 'rect', { x: 1959.3, y: 618.7, width: 20, height: 20, class: 'white-mark' });
    actuals.forEach(a => {
        el(svg, 'circle', { cx: a[0], cy: a[1], r: 6, fill: a[2], class: 'actual-mark' });
    });
    el(svg, 'circle', { cx: 1963.7, cy: 626.7, r: 6, fill: '#fff', class: 'actual-mark' });

    const inset = document.getElementById('insetMarks');
    el(inset, 'rect', { x: 2404, y: 312.6, width: 19, height: 19, class: 'target-mark' });
    el(inset, 'circle', { cx: 2446, cy: 423, r: 6.5, fill: '#c0b020', class: 'actual-mark' });
    el(inset, 'rect', { x: 2285, y: 194, width: 259, height: 260, class: 'inset-frame' });
}

drawRgb();
drawDelta('deltaL', 'Delta L', 422.5);
drawDelta('deltaC', 'Delta C', 467);
drawDelta('deltaH', 'Delta H', 457);
drawDeltaE();
drawCieCanvas();
drawCieMarks();
```
